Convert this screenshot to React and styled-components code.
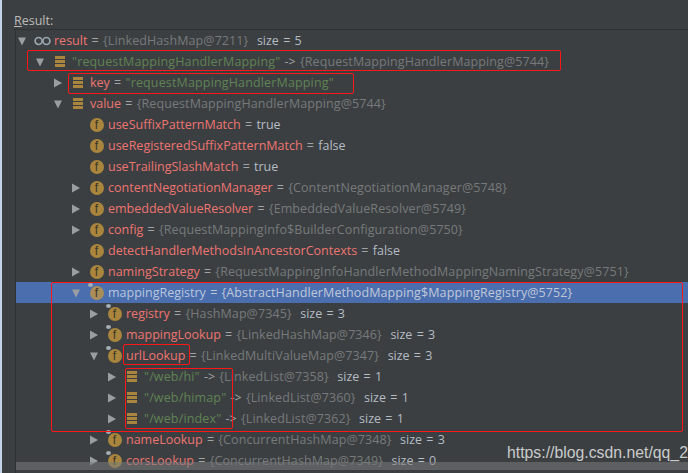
import React from "react";
import styled, { createGlobalStyle } from "styled-components";

const GlobalStyle = createGlobalStyle`
  html, body {
    margin: 0;
    padding: 0;
    background: #3c3f41;
    overflow: hidden;
  }
`;

const rows = [
  { depth: 0, arrow: "down", icon: "watch", name: "result", ref: "{LinkedHashMap@7211}", size: "size = 5" },
  { depth: 1, arrow: "down", icon: "entry", str: '"requestMappingHandlerMapping"', to: "{RequestMappingHandlerMapping@5744}" },
  { depth: 2, arrow: "right", icon: "entry", name: "key", strVal: '"requestMappingHandlerMapping"' },
  { depth: 2, arrow: "down", icon: "entry", name: "value", ref: "{RequestMappingHandlerMapping@5744}" },
  { depth: 3, icon: "field", name: "useSuffixPatternMatch", val: "true" },
  { depth: 3, icon: "field", name: "useRegisteredSuffixPatternMatch", val: "false" },
  { depth: 3, icon: "field", name: "useTrailingSlashMatch", val: "true" },
  { depth: 3, arrow: "right", icon: "field", name: "contentNegotiationManager", ref: "{ContentNegotiationManager@5748}" },
  { depth: 3, arrow: "right", icon: "field", name: "embeddedValueResolver", ref: "{EmbeddedValueResolver@5749}" },
  { depth: 3, arrow: "right", icon: "field", name: "config", ref: "{RequestMappingInfo$BuilderConfiguration@5750}" },
  { depth: 3, icon: "field", name: "detectHandlerMethodsInAncestorContexts", val: "false" },
  { depth: 3, arrow: "right", icon: "field", name: "namingStrategy", ref: "{RequestMappingInfoHandlerMethodMappingNamingStrategy@5751}" },
  { depth: 3, arrow: "down", icon: "field", pin: true, selected: true, name: "mappingRegistry", ref: "{AbstractHandlerMethodMapping$MappingRegistry@5752}" },
  { depth: 4, arrow: "right", icon: "field", pin: true, name: "registry", ref: "{HashMap@7345}", size: "size = 3" },
  { depth: 4, arrow: "right", icon: "field", pin: true, name: "mappingLookup", ref: "{LinkedHashMap@7346}", size: "size = 3" },
  { depth: 4, arrow: "down", icon: "field", pin: true, name: "urlLookup", ref: "{LinkedMultiValueMap@7347}", size: "size = 3" },
  { depth: 5, arrow: "right", icon: "entry", str: '"/web/hi"', to: "{LinkedList@7358}", size: "size = 1" },
  { depth: 5, arrow: "right", icon: "entry", str: '"/web/himap"', to: "{LinkedList@7360}", size: "size = 1" },
  { depth: 5, arrow: "right", icon: "entry", str: '"/web/index"', to: "{LinkedList@7362}", size: "size = 1" },
  { depth: 4, arrow: "right", icon: "field", pin: true, name: "nameLookup", ref: "{ConcurrentHashMap@7348}", size: "size = 3" },
  { depth: 4, arrow: "right", icon: "field", pin: true, name: "corsLookup", ref: "{ConcurrentHashMap@7349}", size: "size = 0" },
];

const marks = [
  { x: 27, y: 50, w: 534, h: 21 },
  { x: 68, y: 73, w: 286, h: 21 },
  { x: 51, y: 282, w: 632, h: 150 },
  { x: 123, y: 344, w: 67, h: 21 },
  { x: 125, y: 368, w: 108, h: 61 },
];

function Arrow({ dir }) {
  return (
    <ArrowBox>
      {dir === "down" && (
        <svg width="12" height="12" viewBox="0 0 12 12">
          <path d="M2 2.5h8L6 10.5z" fill="#9a9ea0" />
        </svg>
      )}
      {dir === "right" && (
        <svg width="12" height="12" viewBox="0 0 12 12">
          <path d="M2 1.5v9l8-4.5z" fill="#9a9ea0" />
        </svg>
      )}
    </ArrowBox>
  );
}

function NodeIcon({ row }) {
  if (row.icon === "watch") {
    return (
      <IconBox>
        <svg width="17" height="10" viewBox="0 0 17 10">
          <circle cx="4.6" cy="5" r="3.5" fill="none" stroke="#9aa7b0" strokeWidth="1.7" />
          <circle cx="12.4" cy="5" r="3.5" fill="none" stroke="#9aa7b0" strokeWidth="1.7" />
        </svg>
      </IconBox>
    );
  }
  if (row.icon === "entry") {
    return (
      <IconBox>
        <svg width="11" height="11" viewBox="0 0 11 11">
          <path d="M0 0h10v3H0zM0 4h10v3H0zM0 8h10v3H0z" fill="#a9853d" />
        </svg>
      </IconBox>
    );
  }
  return (
    <IconBox>
      <FieldBadge $selected={row.selected}>f</FieldBadge>
      {row.pin && <Pin />}
    </IconBox>
  );
}

function App() {
  return (
    <Page>
      <GlobalStyle />
      <Strip />
      <Panel>
        <Title><u>R</u>esult:</Title>
        <Tree>
          {rows.map((row, i) => (
            <Row key={i} $depth={row.depth} $selected={row.selected}>
              <Arrow dir={row.arrow} />
              <NodeIcon row={row} />
              <Label>
                {row.name && <Name $selected={row.selected}>{row.name}</Name>}
                {row.str && <Str>{row.str}</Str>}
                {row.name && <Eq $selected={row.selected}> = </Eq>}
                {row.to && <Eq> -&gt; </Eq>}
                {row.strVal && <Str>{row.strVal}</Str>}
                {row.val && <Value>{row.val}</Value>}
                {row.ref && <Ref $selected={row.selected}>{row.ref}</Ref>}
                {row.to && <Ref>{row.to}</Ref>}
                {row.size && <Value>{"  " + row.size}</Value>}
              </Label>
            </Row>
          ))}
          <Scrollbar />
        </Tree>
      </Panel>
      {marks.map((m, i) => (
        <Mark key={i} style={{ left: m.x, top: m.y, width: m.w, height: m.h }} />
      ))}
      <Watermark>https://blog.csdn.net/qq_2</Watermark>
    </Page>
  );
}

export default App;

const Page = styled.div`
  position: relative;
  display: flex;
  width: 688px;
  height: 473px;
  overflow: hidden;
  background: #3c3f41;
  font-family: "Open Sans", "Noto Sans", sans-serif;
`;

const Strip = styled.div`
  flex: 0 0 2px;
  background: #c3d3e6;
`;

const Panel = styled.div`
  flex: 1;
  display: flex;
  flex-direction: column;
  min-width: 0;
  padding-left: 13px;
`;

const Title = styled.div`
  height: 30px;
  box-sizing: border-box;
  padding-top: 13px;
  margin-left: -1px;
  font-size: 12.5px;
  line-height: 16px;
  color: #bbbbbb;
  border-bottom: 1px solid #2f3234;
`;

const Tree = styled.div`
  position: relative;
  flex: 1;
  border-left: 1px solid #2f3234;
  overflow: hidden;
`;

const Row = styled.div`
  display: flex;
  align-items: center;
  height: 21px;
  padding-left: ${(p) => p.$depth * 18}px;
  background: ${(p) => (p.$selected ? "#4b6eaf" : "transparent")};
  white-space: pre;
`;

const ArrowBox = styled.span`
  display: flex;
  flex: 0 0 12px;
  height: 12px;
`;

const IconBox = styled.span`
  position: relative;
  flex: 0 0 17px;
  height: 17px;
  margin-left: 6px;
  margin-right: 3px;
  display: flex;
  align-items: center;
  justify-content: center;
`;

const FieldBadge = styled.span`
  width: 14px;
  height: 14px;
  border-radius: 50%;
  background: ${(p) => (p.$selected ? "#a98d5a" : "#a9853d")};
  color: #3a3526;
  font-family: "Liberation Sans", sans-serif;
  font-size: 12px;
  line-height: 14px;
  text-align: center;
`;

const Pin = styled.span`
  position: absolute;
  left: 0;
  top: -1px;
  width: 5px;
  height: 4px;
  border-radius: 50%;
  background: #a4aeb4;
`;

const Label = styled.span`
  font-size: 12.5px;
  line-height: 21px;
  word-spacing: 1px;
`;

const Name = styled.span`
  color: ${(p) => (p.$selected ? "#b9c6dc" : "#ec7572")};
`;

const Str = styled.span`
  letter-spacing: 0.15px;
  color: #5f8354;
`;

const Eq = styled.span`
  color: ${(p) => (p.$selected ? "#c0c8d8" : "#a0a4a6")};
`;

const Value = styled.span`
  color: #b4bcc4;
`;

const Ref = styled.span`
  letter-spacing: 0.1px;
  color: ${(p) => (p.$selected ? "#c0c8d8" : "#767a7c")};
`;

const Scrollbar = styled.div`
  position: absolute;
  left: 0;
  right: 0;
  bottom: 3px;
  height: 8px;
  background: rgba(120, 122, 124, 0.55);
`;

const Mark = styled.div`
  position: absolute;
  box-sizing: border-box;
  border: 1px solid #f81818;
  border-radius: 2px;
`;

const Watermark = styled.div`
  position: absolute;
  left: 507px;
  top: 443px;
  font-family: "Liberation Sans", sans-serif;
  font-size: 15.8px;
  line-height: 20px;
  color: #c9cbcc;
  white-space: nowrap;
`;
